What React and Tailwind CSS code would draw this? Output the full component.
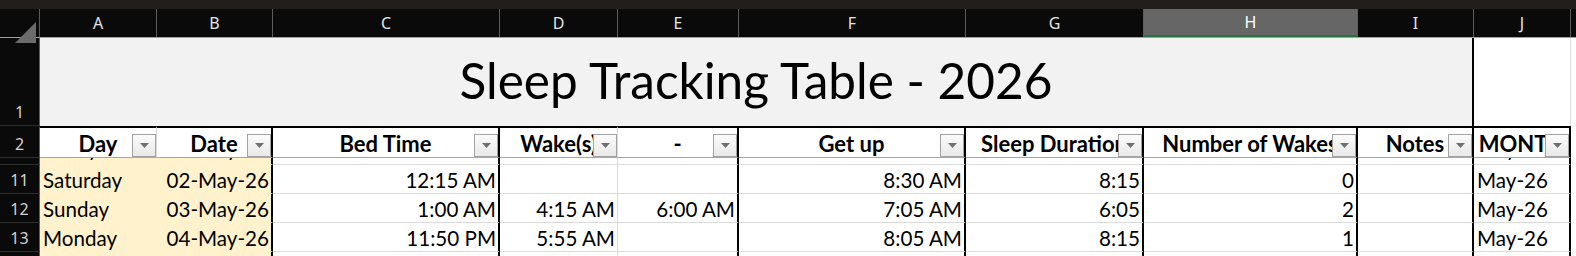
import React from 'react';

const GRID = 'grid grid-cols-[117px_116px_227px_118px_121px_227px_178px_214px_116px_97px]';
const letters = ['A', 'B', 'C', 'D', 'E', 'F', 'G', 'H', 'I', 'J'];
const thick = [false, true, true, false, true, true, true, true, true, true];

const headers = ['Day', 'Date', 'Bed Time', 'Wake(s)', '-', 'Get up', 'Sleep Duration', 'Number of Wakes', 'Notes', 'MONTH'];

// alignment per column: l = left, r = right
const align = ['l', 'r', 'r', 'r', 'r', 'r', 'r', 'r', 'r', 'l'];

const rows = [
  { n: '', cells: ['Friday', '01-May-26', '', '', '', '', '', '', '', 'May-26'] },
  { n: 11, cells: ['Saturday', '02-May-26', '12:15 AM', '', '', '8:30 AM', '8:15', '0', '', 'May-26'] },
  { n: 12, cells: ['Sunday', '03-May-26', '1:00 AM', '4:15 AM', '6:00 AM', '7:05 AM', '6:05', '2', '', 'May-26'] },
  { n: 13, cells: ['Monday', '04-May-26', '11:50 PM', '5:55 AM', '', '8:05 AM', '8:15', '1', '', 'May-26'] },
  { n: 14, cells: ['', '', '', '', '', '', '', '', '', ''] },
];

function RowHead({ n, className = '' }) {
  return (
    <div className={`w-[40px] shrink-0 bg-[#0a0a0a] border-r border-r-[#5c5c5c] border-b border-b-[#2e2e2e] flex items-end justify-center pb-[3px] text-[16px] leading-[20px] text-[#d2d2d2] font-['Noto_Sans',sans-serif] ${className}`}>
      {n}
    </div>
  );
}

function FilterButton() {
  return (
    <div className="absolute right-0 bottom-0 w-[24px] h-[23px] border border-[#a3a3a3] bg-gradient-to-b from-[#fbfbfb] to-[#e9e9e9] flex items-center justify-center">
      <svg width="9" height="5" viewBox="0 0 9 5">
        <polygon points="0,0 9,0 4.5,5" fill="#6f6f6f" />
      </svg>
    </div>
  );
}

function DataRow({ row, raised = false }) {
  return (
    <div className="flex h-[29px] shrink-0">
      <RowHead n={row.n} />
      <div className={GRID}>
        {row.cells.map((c, i) => (
          <div
            key={i}
            className={`h-[29px] border-b border-b-[#dadada] overflow-hidden whitespace-nowrap flex items-end text-[20.6px] leading-[24px] text-black font-['Lato',sans-serif] ${
              raised ? 'pb-[4px]' : 'pb-[1px]'
            } ${align[i] === 'l' ? 'justify-start pl-[3px]' : 'justify-end pr-[2px]'} ${
              thick[i] ? 'border-r-2 border-r-black' : 'border-r border-r-[#dadada]'
            } ${i < 2 ? 'bg-[#fff2cc] border-b-[#fff2cc]' : 'bg-white'} ${i === 0 ? 'border-r-[#fff2cc]' : ''}`}
          >
            {c}
          </div>
        ))}
      </div>
    </div>
  );
}

export default function App() {
  return (
    <div className="w-[1576px] h-[256px] overflow-hidden bg-white flex flex-col select-none">
      {/* window strip */}
      <div className="h-[9px] shrink-0 bg-[#211e1b]" />

      {/* column letters */}
      <div className="flex h-[29px] shrink-0 bg-[#0a0a0a] border-b border-b-[#a0a0a0]">
        <div className="w-[40px] shrink-0 border-r border-r-[#5c5c5c] relative">
          <svg className="absolute left-[15px] top-[13px]" width="21" height="21" viewBox="0 0 21 21">
            <polygon points="21,0 21,21 0,21" fill="#6b6b6b" />
          </svg>
        </div>
        <div className={GRID}>
          {letters.map((l) => (
            <div
              key={l}
              className={`h-[28px] flex items-center justify-center text-[16px] font-['Noto_Sans',sans-serif] border-r border-r-[#5c5c5c] ${
                l === 'H' ? 'bg-[#666666] text-white border-b-2 border-b-[#217346]' : 'text-[#e4e4e4]'
              }`}
            >
              {l}
            </div>
          ))}
        </div>
        <div className="flex-1" />
      </div>

      {/* row 1: title */}
      <div className="flex h-[88px] shrink-0">
        <RowHead n={1} />
        <div className="w-[1434px] shrink-0 bg-[#f2f2f2] border-r-2 border-r-black flex items-end justify-center pb-[16px] text-[49.5px] leading-[60px] text-black font-['Lato',sans-serif]">
          Sleep Tracking Table - 2026
        </div>
        <div className="w-[97px] shrink-0 bg-white border-r border-r-[#dadada]" />
      </div>

      {/* row 2: table header */}
      <div className="flex h-[32px] shrink-0">
        <RowHead n={2} className="border-t-2 border-t-[#0a0a0a]" />
        <div className={GRID}>
          {headers.map((h, i) => (
            <div
              key={h}
              className={`relative h-[32px] bg-white border-t-2 border-t-black border-b border-b-[#a6a6a6] overflow-hidden whitespace-nowrap flex items-end justify-center text-[22px] leading-[26px] font-bold text-black font-['Lato',sans-serif] ${
                thick[i] ? 'border-r-2 border-r-black' : 'border-r border-r-[#dadada]'
              }`}
            >
              <span>{h}</span>
              <FilterButton />
            </div>
          ))}
        </div>
      </div>

      {/* row 10 peeking out under the frozen header */}
      <div className="h-[7px] shrink-0 overflow-hidden">
        <div className="-mt-[22px]">
          <DataRow row={rows[0]} raised />
        </div>
      </div>

      {rows.slice(1).map((r) => (
        <DataRow key={r.n} row={r} />
      ))}
    </div>
  );
}
